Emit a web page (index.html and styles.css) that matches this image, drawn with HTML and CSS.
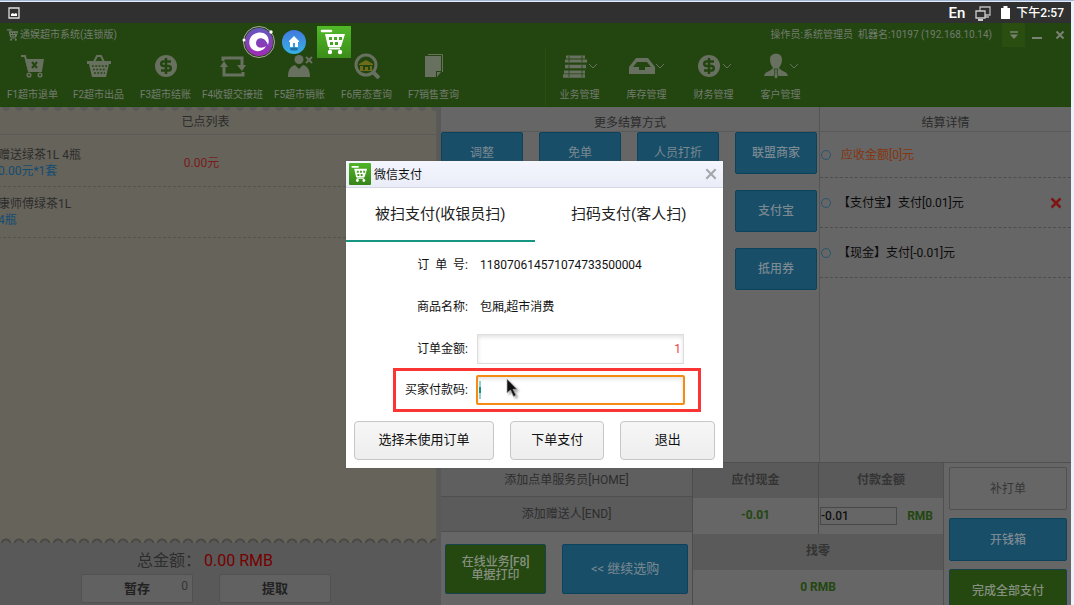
FILE: index.html
```html
<!DOCTYPE html>
<html lang="zh-CN">
<head>
<meta charset="utf-8">
<title>通娱超市系统</title>
<link rel="stylesheet" href="styles.css">
</head>
<body>
<svg class="defs" aria-hidden="true">
  <symbol id="cart" viewBox="0 0 34 32"><path d="M5 5h9" stroke="currentColor" stroke-width="2.500" stroke-linecap="round"/><path fill="currentColor" fill-rule="evenodd" d="M8 8h20l-4 13H11zM12 11v3h3v-3zm5 0v3h3v-3zm5 0v3h3v-3zM13 16v3h3v-3zm5 0v3h3v-3z"/><path d="M12 22.500h11" stroke="currentColor" stroke-width="2"/><circle cx="13" cy="26" r="2.200" fill="currentColor"/><circle cx="23" cy="26" r="2.200" fill="currentColor"/></symbol>
  <symbol id="chev" viewBox="0 0 10 6"><path d="M1 1l4 4 4-4" fill="none" stroke="currentColor"/></symbol>
  <symbol id="coin" viewBox="0 0 26 26"><circle cx="13" cy="13" r="11" fill="currentColor"/><path d="M18 8.500h-7.500a2 2 0 0 0 0 4.500h5a2 2 0 0 1 0 4.500H8M13 5v16" fill="none" stroke="#234611" stroke-width="2.500"/></symbol>
</svg>
<div class="screen">
  <div class="status">
    <svg class="pic" viewBox="0 0 12 12"><path d="M1 1h10v10H1z" fill="none" stroke="#ddd" stroke-width="1.300"/><path d="M3 9V7l2-1 1 1 2-1 1 1v2z" fill="#fff"/></svg>
    <span class="lang">En</span>
    <svg class="mon" viewBox="0 0 18 16"><path d="M6 2h10v8H6zM11 10v2h4" fill="none" stroke="#bbb" stroke-width="1.300"/><path d="M2 6h9v7H2z" fill="#303030" stroke="#ccc" stroke-width="1.300"/><path d="M4 15h5" stroke="#fff" stroke-width="1.500"/></svg>
    <svg class="bat" viewBox="0 0 9 13"><path d="M0 2h2.500V0h4v2H9v11H0z" fill="#fff"/></svg>
    <span class="clock">下午2:57</span>
  </div>
  <div class="app">
    <header class="head">
      <div class="titlebar">
        <svg class="logo"><use href="#cart"/></svg>
        <span class="name">通娱超市系统(连锁版)</span>
        <span class="oper">操作员:系统管理员&nbsp; 机器名:10197 (192.168.10.14)</span>
        <button class="win drop" aria-label="菜单"><svg viewBox="0 0 10 10"><path d="M1 2h8" stroke="currentColor" stroke-width="1.500"/><path d="M1 4.500h8L5 9z" fill="currentColor"/></svg></button>
        <button class="win" aria-label="最小化"><svg viewBox="0 0 10 10"><path d="M0 8h10" stroke="currentColor" stroke-width="2"/></svg></button>
        <button class="win" aria-label="关闭"><svg viewBox="0 0 10 10"><path d="M1.500 1.500l7 7m0-7l-7 7" stroke="currentColor" stroke-width="2"/></svg></button>
      </div>
      <nav class="nav">
        <div class="group">
          <button class="tool"><svg viewBox="0 0 26 26"><path d="M1 3h4l4 15h13" fill="none" stroke="currentColor" stroke-width="2"/><path d="M5 6h19l-2 12H8z" fill="currentColor"/><path d="M12 9l5 6m0-6l-5 6" stroke="#234611" stroke-width="2"/><circle cx="9" cy="22" r="1.800" fill="none" stroke="currentColor" stroke-width="1.500"/><circle cx="20" cy="22" r="1.800" fill="none" stroke="currentColor" stroke-width="1.500"/></svg>F1超市退单</button>
          <button class="tool"><svg viewBox="0 0 26 26"><path d="M8 9l3-6h4l3 6" fill="none" stroke="currentColor" stroke-width="2"/><path d="M1 8h24v3h-2l-3 13H6L3 11H1z" fill="currentColor"/><path d="M6 13h15M7 16.500h13M8 20h11" stroke="#234611" stroke-width="1.500" stroke-dasharray="1.800 1.500"/></svg>F2超市出品</button>
          <button class="tool"><svg viewBox="0 0 26 26"><use href="#coin"/></svg>F3超市结账</button>
          <button class="tool"><svg viewBox="0 0 26 26"><path d="M3 8V5h19v9M23 19v3H4v-9" fill="none" stroke="currentColor" stroke-width="3"/><path d="M17 12h9l-4 6zM0 14h8l-4-6z" fill="currentColor"/></svg>F4收银交接班</button>
          <button class="tool"><svg viewBox="0 0 26 26"><circle cx="12" cy="6.500" r="4.500" fill="currentColor"/><path d="M1 24c0-8 3-11 7-12l4 4 4-4c4 1 7 4 7 12z" fill="currentColor"/><path d="M19 4l6 6m0-6l-6 6" stroke="currentColor" stroke-width="2"/></svg>F5超市销账</button>
          <button class="tool"><svg viewBox="0 0 26 26"><circle cx="12" cy="12" r="10" fill="none" stroke="currentColor" stroke-width="3"/><path d="M19 19l6 6" stroke="currentColor" stroke-width="4"/><path d="M5 11l7-4 7 4v1H5zM6 13h3v4h2v-3h3v3h2v-4h2v5H6z" fill="#6f6c1c"/></svg>F6房态查询</button>
          <button class="tool"><svg viewBox="0 0 26 26"><path d="M7 1.500h14.500V19" fill="none" stroke="currentColor"/><path d="M4 3h16v15h-5v6H4z" fill="currentColor"/><path d="M16 24v-5h4z" fill="currentColor"/></svg>F7销售查询</button>
        </div>
        <div class="group manage">
          <button class="tool"><span class="pair"><svg viewBox="0 0 26 26"><path d="M4 4h19M3 8h22M2 19h21" stroke="currentColor" stroke-width="3"/><path d="M3 13.500h21M1 23h22" stroke="currentColor" stroke-width="3.500"/><path d="M7 3v6M20 3v6M7 12v12M20 12v12" stroke="#234611" stroke-width=".8"/></svg><svg class="chev"><use href="#chev"/></svg></span>业务管理</button>
          <button class="tool"><span class="pair"><svg viewBox="0 0 26 26"><path fill="currentColor" fill-rule="evenodd" d="M7 5h12l7 9v7H0v-7zM8 9l-4 5h6v3h6v-3h6l-4-5z"/></svg><svg class="chev"><use href="#chev"/></svg></span>库存管理</button>
          <button class="tool"><span class="pair"><svg viewBox="0 0 26 26"><use href="#coin"/></svg><svg class="chev"><use href="#chev"/></svg></span>财务管理</button>
          <button class="tool"><span class="pair"><svg viewBox="0 0 26 26"><path d="M7 6c0-7 12-7 12 0 0 5-2 7-3 9 3 4 8 3 9 8H1c1-5 6-4 9-8-1-2-3-4-3-9z" fill="currentColor"/><path d="M11 16h4l-1 3 1 5-2 2-2-2 1-5z" fill="currentColor" stroke="#234611" stroke-width=".8"/></svg><svg class="chev"><use href="#chev"/></svg></span>客户管理</button>
        </div>
      </nav>
      <div class="floats">
        <svg class="f-orb" viewBox="0 0 34 34"><defs><linearGradient id="pu" x2="0" y2="1"><stop stop-color="#6258bd"/><stop offset="1" stop-color="#a02bb4"/></linearGradient></defs><circle cx="17" cy="17" r="15.500" fill="none" stroke="#a9a9a0"/><circle cx="17" cy="17" r="14" fill="url(#pu)"/><path d="M26 20C29 11 22 6 15 8 7 10 5 19 10 24c5 4 12 2 14-3-4 3-10 2-10-3 0-6 9-7 12 2z" fill="#fff"/><circle cx="2" cy="15" r="1.500" fill="#fff"/><circle cx="29" cy="7" r="1.700" fill="#fff"/></svg>
        <svg class="f-home" viewBox="0 0 26 26"><defs><linearGradient id="bl" x2="0" y2="1"><stop stop-color="#4378df"/><stop offset="1" stop-color="#36b3e5"/></linearGradient></defs><circle cx="13" cy="13" r="12" fill="url(#bl)"/><ellipse cx="13" cy="20" rx="4" ry="1.500" fill="#206fa5"/><path d="M8 12l5-5 5 5v1h-1v5h-3v-4h-2v4H9v-5H8z" fill="#fff"/></svg>
        <svg class="f-cart"><use href="#cart"/></svg>
      </div>
    </header>
    <main class="main">
      <section class="left">
        <div class="ticket">
          <h2 class="heading">已点列表</h2>
          <div class="item"><div><p>赠送绿茶1L 4瓶</p><p class="blue">0.00元*1套</p></div><span class="price">0.00元</span></div>
          <div class="item"><div><p>康师傅绿茶1L</p><p class="blue">4瓶</p></div></div>
        </div>
        <div class="total">总金额：<b>0.00 RMB</b></div>
        <div class="hold"><button class="flat">暂存<sup>0</sup></button><button class="flat">提取</button></div>
      </section>
      <section class="right">
        <div class="upper">
          <div class="ways">
            <h2 class="heading">更多结算方式</h2>
            <div class="grid">
              <button class="btn">调整</button><button class="btn">免单</button><button class="btn">人员打折</button><button class="btn last">联盟商家</button>
              <button class="btn last">支付宝</button><button class="btn last">抵用券</button>
            </div>
          </div>
          <div class="detail">
            <h2 class="heading">结算详情</h2>
            <ul class="lines">
              <li class="due">应收金额[0]元</li>
              <li><span>【支付宝】支付[0.01]元</span><button class="del" aria-label="删除"><svg viewBox="0 0 12 12"><path d="M1.500 1.500l9 9m0-9l-9 9" stroke="currentColor" stroke-width="2.500"/></svg></button></li>
              <li><span>【现金】支付[-0.01]元</span></li>
            </ul>
          </div>
        </div>
        <div class="lower">
          <div class="staff">
            <button class="add">添加点单服务员[HOME]</button>
            <button class="add">添加赠送人[END]</button>
            <div class="acts"><button class="btn green">在线业务[F8]<br>单据打印</button><button class="btn go">&lt;&lt; 继续选购</button></div>
          </div>
          <div class="cash">
            <div class="cell shade">应付现金</div><label class="cell shade side" for="paid">付款金额</label>
            <div class="cell num">-0.01</div><div class="cell num side"><input id="paid" class="paid" value="-0.01">RMB</div>
            <div class="cell shade wide">找零</div>
            <div class="cell num wide">0 RMB</div>
          </div>
          <div class="finish"><button class="btn plain">补打单</button><button class="btn">开钱箱</button><button class="btn green">完成全部支付</button></div>
        </div>
      </section>
    </main>
    <div class="layer">
      <form class="dialog">
        <div class="caption"><svg class="dlogo"><use href="#cart"/></svg><span>微信支付</span><button type="button" class="close" aria-label="关闭"><svg viewBox="0 0 12 12"><path d="M2 2l8 8m0-8l-8 8" stroke="currentColor" stroke-width="1.800"/></svg></button></div>
        <div class="tabs"><button type="button" class="tab on">被扫支付(收银员扫)</button><button type="button" class="tab">扫码支付(客人扫)</button></div>
        <div class="row"><span class="lab">订 &nbsp;单 &nbsp;号:</span><span>118070614571074733500004</span></div>
        <div class="row"><span class="lab">商品名称:</span><span>包厢,超市消费</span></div>
        <div class="row"><label class="lab" for="amount">订单金额:</label><input id="amount" class="amount" value="1"></div>
        <div class="row marked"><label class="lab" for="code">买家付款码:</label><input id="code" class="code"><i class="caret"></i><svg class="pointer" viewBox="0 0 14 20"><path d="M2 1v14l3.500-3 3 6.500 2.500-1.200-3-6H12z" fill="#111" stroke="#aaa" stroke-width=".7"/></svg></div>
        <div class="foot"><button type="button" class="gray first">选择未使用订单</button><button type="button" class="gray">下单支付</button><button type="button" class="gray">退出</button></div>
      </form>
    </div>
  </div>
</div>
</body>
</html>
```

FILE: styles.css
```css
* { box-sizing: border-box; }
body { margin: 0; font: 12px/16px Roboto, "Noto Sans CJK SC", sans-serif; background: #eef0fa; }
button, input { font: inherit; color: inherit; margin: 0; padding: 0; border: 0; background: none; }
h2, p, ul { margin: 0; padding: 0; font-size: 12px; font-weight: 400; }
svg { flex: none; display: block; }
.defs { position: absolute; width: 0; height: 0; }
.screen { height: 100vh; min-height: 600px; border-top: 1px solid #a4b6d6; padding-right: 3px; display: flex; flex-direction: column; overflow: hidden; }
.status { flex: none; height: 22px; border-top: 1px solid #e4ecf8; background: #303030; color: #fff; display: flex; align-items: center; gap: 9px; padding: 0 7px 0 8px; }
.pic { width: 12px; height: 12px; margin-right: auto; }
.lang { font-size: 15px; font-weight: 500; }
.mon { width: 18px; height: 16px; }
.bat { width: 9px; height: 13px; }
.clock { font-weight: 500; margin-left: -3px; }
.app { position: relative; flex: 1; min-height: 0; display: flex; flex-direction: column; }

.head { position: relative; flex: none; height: 84px; background: #234611; color: #737b6e; font-size: 10px; border-bottom: 1px solid #1d4607; }
.titlebar { display: flex; align-items: center; height: 24px; }
.logo { width: 16px; height: 16px; margin-left: 5px; }
.name { margin-left: -1px; }
.oper { margin-left: auto; margin-right: 10px; }
.win { width: 23px; height: 24px; display: grid; place-items: center; color: #7a8273; }
.win svg { width: 10px; height: 10px; }
.drop { background: #2a4e10; }
.nav { display: grid; grid-template-columns: 545fr 526fr; height: 59px; }
.group { display: flex; }
.manage { border-left: 1px solid #2b4d11; }
.tool { width: 67px; padding-top: 6px; display: flex; flex-direction: column; align-items: center; gap: 9px; line-height: 14px; white-space: nowrap; color: #737b6e; }
.group:first-child .tool:first-child { width: 65px; }
.manage .tool { width: 67px; }
.tool svg { width: 26px; height: 26px; color: #68705f; }
.pair { display: flex; align-items: center; }
.tool .chev { width: 10px; height: 6px; }
.floats { position: absolute; left: 242px; top: 2px; display: flex; align-items: center; gap: 5px; }
.f-orb { width: 34px; height: 34px; }
.f-home { width: 26px; height: 26px; margin-right: 5px; }
.f-cart { width: 34px; height: 32px; color: #fff; background: linear-gradient(#51b928, #3b8d19); }

.main { flex: 1; min-height: 0; display: grid; grid-template-columns: 441fr 630fr; background: #666; overflow: hidden; color: #2d2d2d; }
.left, .right { min-width: 0; min-height: 0; display: flex; flex-direction: column; }
.left { background: #595959; }
.ticket { flex: 1; margin-right: 4px; padding-top: 3px; overflow: hidden; background: radial-gradient(ellipse 4px 4px at 6px 0, #595959 90%, transparent) 0 0 / 13px 5px repeat-x, radial-gradient(circle at 6px 6px, #595959 3px, #4a4944 4px, #4a4944 5px, transparent 6px) 0 100% / 13px 5px repeat-x, #66635a; border-right: 1px solid #5d5b53; }
.heading { height: 25px; line-height: 25px; text-align: center; border-bottom: 1px solid #5a5a5a; color: #2b2b2b; }
.ticket .heading { padding-right: 25px; }
.item { position: relative; display: grid; grid-template-columns: 185fr 251fr; align-items: center; height: 51px; border-bottom: 1px dashed #55534c; margin-left: -2px; }
.heading + .item { height: 52px; padding-top: 4px; }
.blue { color: #124c73; }
.price { color: #781c1c; }
.total { font-size: 16px; line-height: 22px; padding: 7px 0 2px 137px; }
.total b { color: #700; font-weight: 400; margin-left: 3px; }
.hold { display: flex; gap: 26px; justify-content: center; height: 31px; padding-right: 29px; }
.flat { position: relative; width: 112px; height: 29px; background: #616161; border: 1px solid #515151; border-radius: 2px; font-size: 13px; font-weight: 700; color: #222; }
.flat sup { position: absolute; right: 4px; top: 3px; font-size: 12px; line-height: 16px; font-weight: 400; color: #333; }

.upper { flex: 1; min-height: 0; display: grid; grid-template-columns: 378fr 252fr; }
.right .heading { padding-top: 4px; }
.grid { display: grid; grid-template-columns: repeat(4, 1fr); gap: 16px; padding-right: 2px; }
.btn { height: 42px; background: #184e68; color: #7b8991; border: 1px solid #0c425c; border-radius: 2px; font-size: 12px; }
.last { grid-column: 4; font-weight: 500; }
.detail { border-left: 1px solid #555; }
.lines { list-style: none; color: #0b0b0b; }
.lines li { display: flex; align-items: center; height: 50px; padding: 0 9px 0 1px; border-bottom: 1px dashed #4e4e4e; }
.lines li:first-child { height: 46px; }
.lines li::before { content: ""; width: 8px; height: 8px; margin-right: 7px; border: 1px solid #28566d; border-radius: 50%; }
.lines .due { color: #85350f; }
.lines .due::before { margin-right: 10px; }
.del { margin-left: auto; color: #7d1515; }
.del svg { width: 12px; height: 12px; }

.lower { flex: none; height: 143px; display: grid; grid-template-columns: 251fr 252fr 127fr; border-top: 1px solid #505050; }
.staff { min-width: 0; display: flex; flex-direction: column; }
.add { height: 34px; background: #5f5f5f; border-bottom: 1px solid #4f4f4f; }
.add + .add { height: 35px; background: #5b5b5b; }
.acts { display: flex; gap: 16px; padding: 12px 4px; }
.acts .btn { height: 50px; font-size: 13px; flex: 126; }
.acts .green { flex: 101; font-size: 12px; line-height: 13px; }
.btn.green { background: #24480f; color: #879080; border-color: #16434b; font-weight: 500; }
.cash { display: grid; grid-template-columns: minmax(0, 1fr) minmax(0, 1fr); grid-template-rows: 35px 36px 36px 35px; border-left: 1px solid #4c4c4c; border-right: 1px solid #505050; text-align: center; }
.cell { line-height: 35px; color: #343434; font-weight: 700; }
.shade { background: #5a5a5a; }
.side { border-left: 1px solid #4c4c4c; }
.wide { grid-column: 1 / -1; }
.num { color: #234611; }
.num.side { display: flex; align-items: center; gap: 10px; padding: 0 10px 0 1px; }
.paid { flex: 1; min-width: 0; height: 18px; border: 1px solid #484848; color: #111; line-height: 16px; font-weight: 500; }
.finish { display: flex; flex-direction: column; gap: 8px; padding: 4px 4px 0 5px; }
.finish .btn { flex: none; height: 43px; font-weight: 500; }
.finish .plain { background: #666; color: #363636; border-color: #505050; font-weight: 400; }

.layer { position: absolute; inset: 0 2px 0 0; display: grid; place-items: center; }
.dialog { width: 377px; background: #fff; color: #111; box-shadow: 0 0 1px #555; padding-bottom: 8px; }
.caption { display: flex; align-items: center; height: 27px; padding: 0 5px 0 3px; background: linear-gradient(#f4f6fe, #eaecf7); border-bottom: 1px solid #d5d7e2; gap: 3px; }
.caption span { padding-top: 2px; }
.dlogo { width: 22px; height: 22px; color: #fff; background: linear-gradient(#4fb526, #37851a); border-radius: 1px; }
.close { margin-left: auto; color: #a5a7ac; }
.close svg { width: 14px; height: 14px; }
.tabs { display: grid; grid-template-columns: 1fr 1fr; height: 54px; margin-bottom: 2px; }
.tab { font-size: 15px; color: #222; border-bottom: 2px solid transparent; padding-top: 1px; }
.tab.on { border-color: #169582; }
.row { display: flex; align-items: center; height: 42px; padding-right: 39px; }
.lab { width: 122px; margin-right: 12px; text-align: right; white-space: nowrap; }
.amount { flex: 1; min-width: 0; height: 30px; margin-left: -3px; padding-right: 2px; border: 1px solid #ddd; box-shadow: inset 0 2px 4px #e2e2e2; text-align: right; color: #f23c3c; }
.marked { position: relative; height: 44px; margin: -2px 22px 0 47px; padding-right: 13px; border: 3px solid #fb3434; }
.marked .lab { width: 72px; margin-right: 8px; }
.code { flex: 1; min-width: 0; height: 30px; border: 2px solid #f68b14; border-radius: 2px; box-shadow: inset 0 2px 4px #e2e2e2; outline: none; }
.caret { position: absolute; left: 83px; top: 10px; width: 2px; height: 18px; background: linear-gradient(#8fd0c8 35%, #149582 35% 65%, #8fd0c8 65%); }
.pointer { position: absolute; left: 109px; top: 7px; width: 14px; height: 20px; filter: drop-shadow(2px 2px 1px #aaa); }
.foot { display: flex; gap: 16px; padding: 9px 8px 0; }
.gray { flex: 94; height: 39px; border: 1px solid #c6c6c6; border-radius: 4px; background: linear-gradient(#f6f6f6, #eee); font-size: 13px; }
.gray.first { flex: 140; }
```
